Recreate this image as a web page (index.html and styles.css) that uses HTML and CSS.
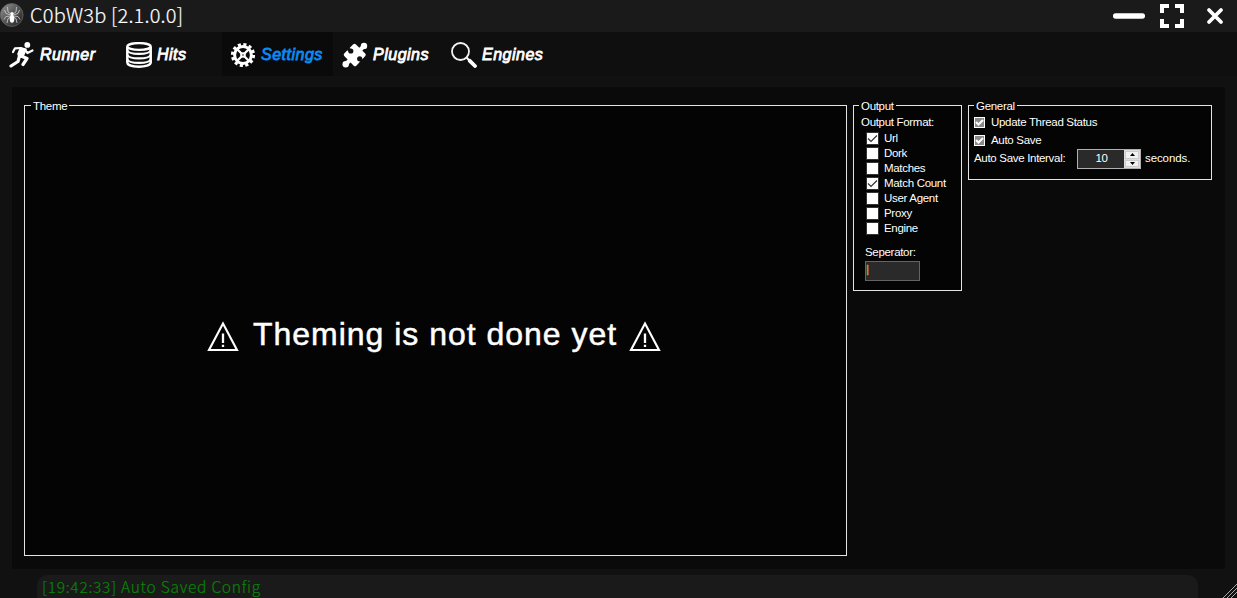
FILE: index.html
```html
<!DOCTYPE html>
<html lang="en">
<head>
<meta charset="utf-8">
<title>C0bW3b</title>
<link rel="stylesheet" href="styles.css">
</head>
<body>
<div class="window">
  <header class="titlebar">
    <svg class="logo" width="24" height="24" viewBox="0 0 24 24">
      <defs><linearGradient id="ball" x1="0" y1="0" x2="1" y2="1"><stop offset="0" stop-color="#9a9a9a"/><stop offset=".45" stop-color="#5a5a5a"/><stop offset="1" stop-color="#1c1c1c"/></linearGradient></defs>
      <circle cx="11.700" cy="12" r="11.400" fill="url(#ball)" stroke="#666" stroke-width=".8"/>
      <g fill="none" stroke="#d4d4d4" stroke-width=".8">
        <path d="M11 11 8 9 7.500 4M10.500 12 6 10.500 4.500 7M10.500 13 6 13.500 4 16.500M11 14 8 15.500 7 20M13 11 16 9 16.500 4M13.500 12 18 10.500 19.500 7M13.500 13 18 13.500 20 16.500M13 14 16 15.500 17 20"/>
      </g>
      <ellipse cx="12" cy="15.800" rx="2.300" ry="4" fill="#fff"/><circle cx="12" cy="10.800" r="1.700" fill="#fff"/>
    </svg>
    <h1 class="title">C0bW3b [2.1.0.0]</h1>
    <div class="controls">
      <svg width="32" height="32" viewBox="0 0 32 32"><rect y="13.200" width="32" height="5.500" rx="2.600" fill="#fff"/></svg>
      <svg width="24" height="32" viewBox="0 0 24 32"><path d="M2 13V6H9M15 6H22V13M22 19V26H15M9 26H2V19" fill="none" stroke="#fff" stroke-width="4"/></svg>
      <svg width="18" height="32" viewBox="0 0 18 32"><path d="M3 10 15 22M15 10 3 22" stroke="#fff" stroke-width="3.800" stroke-linecap="round"/></svg>
    </div>
  </header>

  <nav class="tabs">
    <a class="tab runner">
      <svg width="26" height="26" viewBox="0 0 26 26"><circle cx="18.300" cy="2.900" r="2.900" fill="#fff"/><path d="M4 10 6 6.300 12 6" fill="none" stroke="#fff" stroke-width="2.200" stroke-linecap="round" stroke-linejoin="round"/><path d="M11.500 5.800 17 7.300 14 14.500 10 14.500 9 12Z" fill="#fff" stroke="#fff" stroke-width="1.600" stroke-linejoin="round"/><path d="M16 8 18.500 11 23.500 8.500" fill="none" stroke="#fff" stroke-width="2.200" stroke-linecap="round" stroke-linejoin="round"/><path d="M12 14 18 16.500 14 22.500M10.500 14 9 19.500 2 24" fill="none" stroke="#fff" stroke-width="3.200" stroke-linecap="round" stroke-linejoin="round"/></svg>
      <span>Runner</span>
    </a>
    <a class="tab hits">
      <svg width="26" height="26" viewBox="0 0 26 26"><path d="M1.300 5V20.500C1.300 26 24.700 26 24.700 20.500V5" fill="none" stroke="#fff" stroke-width="2.500"/><ellipse cx="13" cy="4.500" rx="11.700" ry="3.400" fill="none" stroke="#fff" stroke-width="2.400"/><path d="M1.500 8.500C3 13 23 13 24.500 8.500M1.500 13C3 17.500 23 17.500 24.500 13M1.500 17.500C3 22 23 22 24.500 17.500" fill="none" stroke="#fff" stroke-width="2.300"/></svg>
      <span>Hits</span>
    </a>
    <a class="tab settings active">
      <svg width="26" height="26" viewBox="0 0 26 26"><circle cx="13" cy="13" r="10.600" fill="none" stroke="#fff" stroke-width="3" stroke-dasharray="3.100 2.450"/><circle cx="13" cy="13" r="8.400" fill="none" stroke="#fff" stroke-width="3"/><path d="M7.500 7.500 18.500 18.500M18.500 7.500 7.500 18.500" stroke="#fff" stroke-width="2.300"/><circle cx="13" cy="13" r="2.800" fill="#fff"/><circle cx="13" cy="13" r="1" fill="#777"/></svg>
      <span>Settings</span>
    </a>
    <a class="tab plugins">
      <svg width="26" height="26" viewBox="0 0 26 26"><path d="M12.500 3.500 22 12.700 13 22.500 3.500 12.700Z" fill="#fff" stroke="#fff" stroke-width="3.500" stroke-linejoin="round"/><path d="M16 10 22 4M10 16 4 22" stroke="#fff" stroke-width="4.200"/><circle cx="22" cy="3.900" r="3.200" fill="#fff"/><circle cx="3.700" cy="22.200" r="3.200" fill="#fff"/><path d="M5 6 8.700 9M21 20 18 17" stroke="#0f0f0f" stroke-width="3"/><circle cx="8.800" cy="9" r="2.600" fill="#0f0f0f"/><circle cx="17.700" cy="16.800" r="2.600" fill="#0f0f0f"/></svg>
      <span>Plugins</span>
    </a>
    <a class="tab engines">
      <svg width="26" height="26" viewBox="0 0 26 26"><circle cx="9.500" cy="9.500" r="8.500" fill="none" stroke="#f4f4f4" stroke-width="1.800"/><path d="M15.700 15.700 19 19" stroke="#fff" stroke-width="2"/><path d="M18.800 18.800 24 24" stroke="#fff" stroke-width="3.800" stroke-linecap="round"/></svg>
      <span>Engines</span>
    </a>
  </nav>

  <main class="panel">
    <fieldset class="group theme">
      <legend>Theme</legend>
      <p class="notice">
        <svg width="32" height="31" viewBox="0 0 32 31"><path d="M16 2.500 30 29H2Z" fill="none" stroke="#fff" stroke-width="2.100"/><path d="M16 12.500V22M16 23.700V26" stroke="#fff" stroke-width="2.300"/></svg>
        <span>Theming is not done yet</span>
        <svg width="32" height="31" viewBox="0 0 32 31"><path d="M16 2.500 30 29H2Z" fill="none" stroke="#fff" stroke-width="2.100"/><path d="M16 12.500V22M16 23.700V26" stroke="#fff" stroke-width="2.300"/></svg>
      </p>
    </fieldset>

    <fieldset class="group output">
      <legend>Output</legend>
      <div class="caption">Output Format:</div>
      <ul class="formats">
        <li><i class="box"><svg width="11" height="11" viewBox="0 0 11 11"><path d="M1 5.500 4 8.500 10 2.500"/></svg></i>Url</li>
        <li><i class="box"></i>Dork</li>
        <li><i class="box"></i>Matches</li>
        <li><i class="box"><svg width="11" height="11" viewBox="0 0 11 11"><path d="M1 5.500 4 8.500 10 2.500"/></svg></i>Match Count</li>
        <li><i class="box"></i>User Agent</li>
        <li><i class="box"></i>Proxy</li>
        <li><i class="box"></i>Engine</li>
      </ul>
      <div class="separator-label">Seperator:</div>
      <div class="separator"><span>|</span></div>
    </fieldset>

    <fieldset class="group general">
      <legend>General</legend>
      <div class="option"><i class="flat"><svg width="9" height="9" viewBox="0 0 9 9"><path d="M1 4 3.500 6.500 8 2"/></svg></i><span>Update Thread Status</span></div>
      <div class="option"><i class="flat"><svg width="9" height="9" viewBox="0 0 9 9"><path d="M1 4 3.500 6.500 8 2"/></svg></i><span>Auto Save</span></div>
      <div class="interval">
        <span class="interval-label">Auto Save Interval:</span>
        <div class="spinner">
          <span class="value">10</span>
          <div class="arrows">
            <i><svg width="5" height="3" viewBox="0 0 5 3"><path d="M0 3 2.500 0 5 3Z"/></svg></i>
            <i><svg width="5" height="3" viewBox="0 0 5 3"><path d="M0 0H5L2.500 3Z"/></svg></i>
          </div>
        </div>
        <span class="unit">seconds.</span>
      </div>
    </fieldset>
  </main>

  <footer class="status">
    <div class="log"><span>[19:42:33] Auto Saved Config</span></div>
    <svg class="grip" width="15" height="15" viewBox="0 0 15 15"><path d="M1 15 15 1M5 15 15 5M9 15 15 9" stroke="#aaa" stroke-width="1"/></svg>
  </footer>
</div>
</body>
</html>
```
FILE: styles.css
```css
* { box-sizing: border-box; }
body { margin: 0; background: #111; color: #fff; font-family: "Liberation Sans", Arial, sans-serif; }
svg { display: block; flex: none; }
.window { width: 1237px; height: 598px; display: flex; flex-direction: column; overflow: hidden; background: #111; white-space: nowrap; }

.titlebar { height: 32px; flex: none; display: flex; align-items: center; background: #1a1a1a; padding-right: 13px; }
.logo { margin-top: -2px; }
.title { margin: 0 0 0 6px; font: 300 20px/30px "Noto Sans CJK JP", "Noto Sans", sans-serif; letter-spacing: 0.2px; padding-bottom: 2px; -webkit-text-stroke: 0.2px #fff; }
.controls { display: flex; margin-left: auto; }
.controls svg + svg { margin-left: 15px; }
.controls svg:last-child { margin-left: 22px; }

.tabs { height: 44px; flex: none; display: flex; background: #0f0f0f; }
.tab { display: flex; align-items: center; font-size: 16px; font-style: italic; letter-spacing: 0.5px; padding: 1px 0 0 9px; gap: 5px; -webkit-text-stroke: 0.8px currentColor; }
.tab svg { -webkit-text-stroke: 0; }
.runner { width: 117px; }
.hits { width: 105px; }
.settings { width: 111px; padding-left: 8px; }
.plugins { width: 109px; }
.active { background: #0a0a0a; color: #0b8cf5; }

.panel { height: 482px; flex: none; margin: 11px 12px 0; padding: 12px 13px 13px 12px; display: flex; align-items: flex-start; gap: 6px; background: #0a0a0a; }
.group { margin: 0; min-width: 0; border: 1px solid #e4e4e4; padding: 0; background: #040404; font-size: 11.5px; letter-spacing: -0.31px; line-height: 15px; }
.group legend { margin-left: 6px; padding: 0 2px; height: 13px; line-height: 14px; }
.output legend, .general legend { margin-left: 5px; }
.theme { width: 823px; height: 457px; }
.output { width: 109px; height: 192px; }
.general { width: 244px; height: 81px; }

.notice { margin: 202px 0 0 182px; display: flex; align-items: center; font-size: 32px; line-height: 40px; letter-spacing: 0.98px; -webkit-text-stroke: 0.5px #fff; }
.notice span { margin: 0 12px 0 14px; }
.notice svg { margin-top: 4px; }

.caption { padding-left: 7px; margin-top: 3px; }
.formats { list-style: none; margin: 1px 0 0 12px; padding: 0; }
.formats li { height: 15px; display: flex; align-items: center; gap: 5px; }
.box { width: 13px; height: 13px; flex: none; background: #fff; border: 1px solid #333; }
.box path { fill: none; stroke: #333; stroke-width: 1.2; }
.separator-label { margin: 9px 0 0 11px; }
.separator { width: 55px; height: 20px; margin: 1px 0 0 11px; border: 1px solid #646464; background: #2a2a2a; color: #d08a38; line-height: 15px; -webkit-text-stroke: 0.6px #d08a38; }

.option { height: 18px; display: flex; align-items: center; gap: 6px; padding-left: 5px; }
.general legend + .option { margin-top: 1px; }
.flat { width: 11px; height: 11px; background: #8a8a8a; border: 1px solid #fff; }
.flat path { fill: none; stroke: #fff; stroke-width: 2; }
.interval { display: flex; height: 20px; margin-left: 5px; }
.interval-label { width: 103px; line-height: 18px; }
.spinner { width: 64px; height: 20px; display: flex; border: 1px solid #b0b0b0; background: #2a2a2a; }
.value { width: 46px; text-align: center; line-height: 17px; padding-left: 1px; }
.arrows { width: 16px; background: #ddd; display: flex; flex-direction: column; gap: 1px; padding: 1px; }
.arrows i { flex: 1; background: #f2f2f2; border: 1px solid #ccc; display: flex; align-items: center; justify-content: center; }
.unit { margin-left: 4px; line-height: 18px; letter-spacing: -0.1px; }

.status { flex: 1; display: flex; align-items: flex-end; padding: 6px 0 0 37px; }
.log { width: 1161px; height: 23px; background: #1a1a1a; border-radius: 10px 10px 0 0; padding-left: 5px; color: #078407; font: 300 15.5px/22px "Noto Sans CJK JP", "Noto Sans", sans-serif; letter-spacing: 0.75px; -webkit-text-stroke: 0.2px #078407; }
.grip { margin-left: auto; }
```
